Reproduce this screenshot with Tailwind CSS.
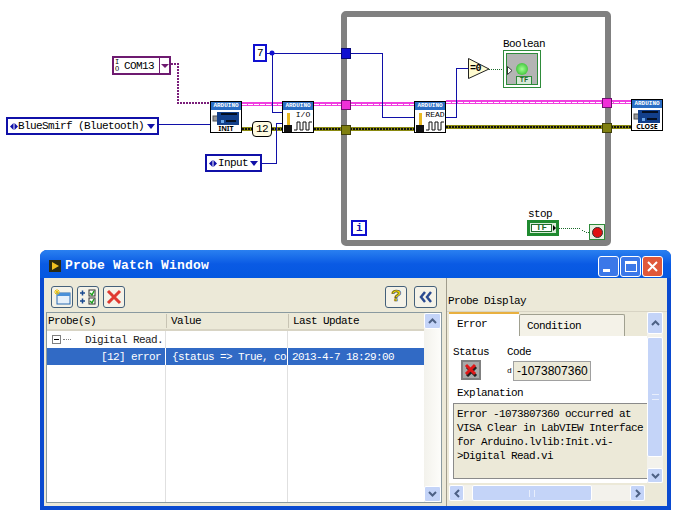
<!DOCTYPE html>
<html lang="en">
<head>
  <meta charset="UTF-8" />
  <meta name="viewport" content="width=device-width, initial-scale=1.0"/>
  <title>Digital Read | Probe Watch Window</title>
  <script src="https://cdn.jsdelivr.net/npm/@tailwindcss/browser@4"></script>
</head>

<body class="bg-white w-[694px] h-[519px] overflow-hidden font-['Liberation_Mono',monospace] text-[11px] tracking-[-0.6px] leading-[14px] text-black">

  <!-- Block diagram -->
  <section class="relative h-[250px]">

    <!-- While loop frame -->
    <div class="absolute left-[341px] top-[11px] w-[270px] h-[235px] border-[6px] border-[#808080] rounded-[5px]"></div>

    <!-- Wires -->
    <svg class="absolute left-0 top-0" width="694" height="250" fill="none" shape-rendering="crispEdges">
      <path d="M171 64H178V103H210" stroke="#7a1f7a" stroke-width="2" stroke-dasharray="2 1"/>
      <path d="M242 104H282M314 104H414M446 102H631" stroke="#f040e0" stroke-width="4"/>
      <path d="M242 104H282M314 104H414M446 102H631" stroke="#fff" stroke-width="1" stroke-dasharray="5 1"/>
      <path d="M242 129H252M272 129H282M314 129H414M446 127H631" stroke="#8a8a10" stroke-width="4"/>
      <path d="M242 129H252M272 129H282M314 129H414M446 127H631" stroke="#111" stroke-width="2" stroke-dasharray="2 1"/>
      <path d="M159 124H210M262 163H276V123H282M266 53H345M272 53V112H282M350 53H382V117H414M446 117H456V68H468" stroke="#1010a8" stroke-width="1"/>
      <circle cx="272" cy="53" r="2.5" fill="#1010d0" shape-rendering="auto"/>
      <path d="M489 69H505M559 228H580L585 232H589" stroke="#1a6a2a" stroke-dasharray="1 1"/>
      <!-- Shift registers and tunnels -->
      <rect x="341" y="48" width="9" height="10" fill="#1010d0" stroke="#08087a"/>
      <rect x="341" y="100" width="9" height="9" fill="#f030d8" stroke="#701070"/>
      <rect x="341" y="125" width="9" height="9" fill="#808010" stroke="#404008"/>
      <rect x="602" y="98" width="9" height="9" fill="#f030d8" stroke="#701070"/>
      <rect x="602" y="123" width="9" height="9" fill="#808010" stroke="#404008"/>
      <!-- Equal to zero -->
      <path d="M468.500 58.500V78.500L489 69Z" fill="#fffbd0" stroke="#222" shape-rendering="auto"/>
    </svg>
    <span class="absolute left-[470px] top-[62px] text-[10px] leading-[14px] font-bold">=0</span>

    <!-- Controls -->
    <div class="absolute left-[112px] top-[56px] w-[59px] h-[19px] border-2 border-[#6e1a70] bg-white flex items-center">
      <span class="w-[10px] text-[7px] leading-[7px] pl-[1px]">I<br/>O</span>
      <span class="flex-1 text-[11px]">COM13</span>
      <span class="w-[10px] h-full border-l border-[#6e1a70] flex items-center justify-center">
        <span class="border-x-[4px] border-t-[4px] border-x-transparent border-t-[#6e1a70]"></span>
      </span>
    </div>

    <div class="absolute left-[6px] top-[117px] w-[153px] h-[18px] border-2 border-[#1010a8] bg-white flex items-center pl-[2px] whitespace-nowrap">
      <svg width="8" height="7" class="shrink-0"><path d="M0 3.500L3.500 0V7ZM8 3.500L4.500 0V7Z" fill="#1010a8"/></svg>
      <span class="flex-1">BlueSmirf (Bluetooth)</span>
      <span class="mr-[2px] border-x-[4px] border-t-[5px] border-x-transparent border-t-[#1010a8]"></span>
    </div>

    <div class="absolute left-[205px] top-[154px] w-[57px] h-[18px] border-2 border-[#1010a8] bg-white flex items-center pl-[2px] whitespace-nowrap">
      <svg width="9" height="7" class="shrink-0"><path d="M0 3.500L3.500 0V7ZM8 3.500L4.500 0V7Z" fill="#1010a8"/></svg>
      <span class="flex-1">Input</span>
      <span class="mr-[2px] border-x-[4px] border-t-[5px] border-x-transparent border-t-[#1010a8]"></span>
    </div>

    <div class="absolute left-[253px] top-[44px] w-[14px] h-[18px] border-2 border-[#1010d0] bg-white flex items-center justify-center">7</div>
    <div class="absolute left-[252px] top-[121px] w-[20px] h-[16px] border border-black bg-[#fffbe0] rounded-[4px] flex items-center justify-center">12</div>

    <!-- INIT -->
    <div class="absolute left-[210px] top-[101px] w-[32px] h-[32px] border border-black bg-white flex flex-col items-center">
      <div class="w-full h-[8px] bg-[#2a6dc4] text-white text-[6px] leading-[8px] tracking-[0] text-center font-bold shrink-0">ARDUINO</div>
      <svg width="28" height="14" class="mt-[1px] shrink-0">
        <rect x="1" y="5" width="5" height="5" fill="#999" stroke="#555"/>
        <rect x="5" y="1" width="22" height="13" fill="#123f8a"/>
        <path d="M9 3H25M14 10H24" stroke="#000" stroke-width="1.500"/>
        <rect x="9" y="9" width="3" height="3" fill="#6aa6e8"/>
      </svg>
      <span class="text-[7px] leading-[8px] tracking-[0] font-sans font-bold">INIT</span>
    </div>

    <!-- I/O -->
    <div class="absolute left-[282px] top-[101px] w-[32px] h-[32px] border border-black bg-white flex flex-col">
      <div class="w-full h-[8px] bg-[#2a6dc4] text-white text-[6px] leading-[8px] tracking-[0] text-center font-bold shrink-0">ARDUINO</div>
      <div class="flex flex-1">
        <svg width="10" height="22" class="shrink-0">
          <rect x="4" y="3" width="3" height="13" fill="#e8b820"/>
          <rect x="1" y="15" width="8" height="7" fill="#111"/>
        </svg>
        <div class="flex flex-col items-center">
          <span class="text-[8px] leading-[10px] tracking-[0]">I/O</span>
          <svg width="20" height="11"><path d="M1 10H4V2H7V10H10V2H13V10H16V2H19" stroke="#111" fill="none"/></svg>
        </div>
      </div>
    </div>

    <!-- READ -->
    <div class="absolute left-[414px] top-[101px] w-[32px] h-[32px] border border-black bg-white flex flex-col">
      <div class="w-full h-[8px] bg-[#2a6dc4] text-white text-[6px] leading-[8px] tracking-[0] text-center font-bold shrink-0">ARDUINO</div>
      <div class="flex flex-1">
        <svg width="10" height="22" class="shrink-0">
          <rect x="4" y="3" width="3" height="13" fill="#e8b820"/>
          <rect x="1" y="15" width="8" height="7" fill="#111"/>
        </svg>
        <div class="flex flex-col items-center">
          <span class="text-[8px] leading-[10px] tracking-[0]">READ</span>
          <svg width="20" height="11"><path d="M1 10H4V2H7V10H10V2H13V10H16V2H19" stroke="#111" fill="none"/></svg>
        </div>
      </div>
    </div>

    <!-- CLOSE -->
    <div class="absolute left-[631px] top-[99px] w-[32px] h-[32px] border border-black bg-white flex flex-col items-center">
      <div class="w-full h-[8px] bg-[#2a6dc4] text-white text-[6px] leading-[8px] tracking-[0] text-center font-bold shrink-0">ARDUINO</div>
      <svg width="28" height="14" class="mt-[1px] shrink-0">
        <rect x="1" y="5" width="5" height="5" fill="#999" stroke="#555"/>
        <rect x="5" y="1" width="22" height="13" fill="#123f8a"/>
        <path d="M9 3H25M14 10H24" stroke="#000" stroke-width="1.500"/>
        <rect x="9" y="9" width="3" height="3" fill="#6aa6e8"/>
      </svg>
      <span class="text-[7px] leading-[8px] tracking-[0] font-sans font-bold">CLOSE</span>
    </div>

    <!-- Boolean indicator -->
    <span class="absolute left-[503px] top-[37px]">Boolean</span>
    <div class="absolute left-[503px] top-[50px] w-[38px] h-[38px] border border-[#2e8b3a] bg-white p-[2px]">
      <div class="relative w-full h-full border border-[#2e8b3a] bg-[#b4b4b4] flex items-center justify-center">
        <span class="w-[12px] h-[12px] rounded-full bg-[radial-gradient(circle,#a0ff90,#20b020)] mb-[1px]"></span>
        <svg width="6" height="9" class="absolute left-0 top-[12px]"><path d="M0.500 0.500L5 4.500L0.500 8.500Z" fill="#fff" stroke="#333"/></svg>
        <span class="absolute left-[9px] bottom-0 w-[16px] h-[8px] bg-[#d8e8d8] border border-b-0 border-[#2e8b3a] text-[7px] leading-[7px] tracking-[0] text-center font-bold text-[#1c6a2a]">TF</span>
      </div>
    </div>

    <!-- Stop -->
    <span class="absolute left-[528px] top-[207px]">stop</span>
    <div class="absolute left-[527px] top-[220px] w-[32px] h-[16px] border-[3px] border-[#1f8a30] bg-[#d8ecd8] flex items-center pl-[1px]">
      <span class="w-[22px] h-[8px] border border-[#1f6a2a] text-[9px] leading-[6px] tracking-[0] text-center font-bold text-[#1f6a2a] bg-white">TF</span>
      <span class="ml-[1px] border-y-[3px] border-l-[3px] border-y-transparent border-l-black"></span>
    </div>
    <div class="absolute left-[589px] top-[224px] w-[16px] h-[16px] border border-[#2e8b3a] bg-[#e8f0e0] flex items-center justify-center">
      <span class="w-[11px] h-[11px] rounded-full bg-[#e01010] border border-[#333]"></span>
    </div>

    <!-- Iteration terminal -->
    <div class="absolute left-[351px] top-[220px] w-[16px] h-[16px] border-2 border-[#1010d0] bg-white flex items-center justify-center text-[#1010a8] font-bold">i</div>
  </section>

  <!-- Probe Watch Window -->
  <section class="ml-[40px] w-[631px] h-[260px] rounded-t-[7px] bg-[#0a52dc] border-x-[4px] border-b-[4px] border-[#0a4ad0] flex flex-col">

    <!-- Title bar -->
    <header class="h-[28px] shrink-0 -mx-[4px] px-[8px] pt-[4px] rounded-t-[7px] bg-gradient-to-b from-[#2a80f0] via-[#0a5ae4] to-[#0458e0] flex items-center">
      <svg width="14" height="14" class="shrink-0">
        <rect x="1" y="1" width="12" height="12" fill="#2a2a10"/>
        <path d="M4 3L11 7L4 11Z" fill="#f0c020"/>
      </svg>
      <h1 class="ml-[3px] text-white font-bold text-[13px] tracking-[0.2px]">Probe Watch Window</h1>
      <div class="ml-auto flex gap-[1px]">
        <button class="w-[21px] h-[21px] rounded-[3px] border border-white bg-[#3c78e8] flex items-end p-[4px]">
          <span class="w-[7px] h-[3px] bg-white"></span>
        </button>
        <button class="w-[21px] h-[21px] rounded-[3px] border border-white bg-[#3c78e8] flex items-center justify-center">
          <span class="w-[12px] h-[11px] border border-t-[3px] border-white"></span>
        </button>
        <button class="w-[21px] h-[21px] rounded-[3px] border border-white bg-[#e0583a] flex items-center justify-center">
          <svg width="13" height="13"><path d="M2 2L11 11M11 2L2 11" stroke="#fff" stroke-width="2"/></svg>
        </button>
      </div>
    </header>

    <!-- Client area -->
    <div class="flex-1 min-h-0 bg-[#ece9d8] flex pl-[2px]">

      <!-- Left pane -->
      <div class="w-[396px] shrink-0 flex flex-col pb-[3px]">
        <!-- Toolbar -->
        <div class="h-[34px] shrink-0 flex items-start pt-[8px] pl-[5px] pr-[5px]">
          <button class="w-[22px] h-[22px] rounded-[3px] border border-[#44607a] bg-[#f4f2e8] flex items-center justify-center">
            <svg width="18" height="16">
              <rect x="4" y="4" width="13" height="11" fill="#e6f0fa" stroke="#2a6ab0"/>
              <rect x="4" y="4" width="13" height="3" fill="#4a90d8"/>
              <path d="M4 0V6M1 3H7M2 1L6 5M6 1L2 5" stroke="#e8c010"/>
            </svg>
          </button>
          <button class="ml-[4px] w-[22px] h-[22px] rounded-[3px] border border-[#44607a] bg-[#f4f2e8] flex items-center justify-center">
            <svg width="18" height="16" fill="none">
              <path d="M1 4H6M3.500 1.500V6.500M1 12H6M3.500 9.500V14.500" stroke="#1a4a90" stroke-width="1.500"/>
              <rect x="10" y="1" width="6" height="6" fill="#fff" stroke="#333"/>
              <rect x="10" y="9" width="6" height="6" fill="#fff" stroke="#333"/>
              <path d="M11 4L13 6L15 2M11 12L13 14L15 10" stroke="#20a020" stroke-width="1.500"/>
            </svg>
          </button>
          <button class="ml-[4px] w-[22px] h-[22px] rounded-[3px] border border-[#44607a] bg-[#f4f2e8] flex items-center justify-center">
            <svg width="16" height="16"><path d="M2 2L14 14M14 2L2 14" stroke="#e03a30" stroke-width="3"/></svg>
          </button>
          <button class="ml-auto w-[22px] h-[22px] rounded-[3px] border border-[#44607a] bg-[#f4f2e8] flex items-center justify-center font-bold text-[17px] text-[#f0d800] [-webkit-text-stroke:0.6px_#333]">?</button>
          <button class="ml-[7px] w-[23px] h-[22px] rounded-[3px] border border-[#44607a] bg-[#f4f2e8] flex items-center justify-center">
            <svg width="14" height="12" fill="none"><path d="M6 1L2 6L6 11M12 1L8 6L12 11" stroke="#2a4a90" stroke-width="2.500"/></svg>
          </button>
        </div>

        <!-- Probe table -->
        <div class="flex-1 min-h-0 bg-white border border-[#8a9aa0] flex">
          <div class="flex-1 min-w-0 flex flex-col">
            <div class="h-[18px] shrink-0 bg-[#ece9d8] border-b-2 border-[#d8d4c4] grid grid-cols-[119px_122px_1fr] items-center">
              <span class="pl-[1px]">Probe(s)</span>
              <span class="pl-[4px] border-l border-[#c8c4b4]">Value</span>
              <span class="pl-[4px] border-l border-[#c8c4b4]">Last Update</span>
            </div>
            <div class="flex-1 relative grid grid-cols-[119px_122px_1fr] grid-rows-[17px_17px_1fr]">
              <div class="flex items-center pl-[5px] border-r border-[#e0e0e0]">
                <span class="w-[9px] h-[9px] border border-[#808080] flex items-center justify-center"><span class="w-[5px] h-[1px] bg-black"></span></span>
                <span class="ml-[2px] w-[8px] border-t border-dotted border-[#808080]"></span>
                <span class="ml-[14px] text-[#222] whitespace-nowrap">Digital Read.</span>
              </div>
              <div class="border-r border-[#e0e0e0]"></div>
              <div></div>
              <div class="bg-[#316ac5] text-white flex items-center justify-end pr-[4px] border-r border-white">[12] error</div>
              <div class="bg-[#316ac5] text-white flex items-center pl-[6px] border-r border-white overflow-hidden whitespace-nowrap">{status => True, co</div>
              <div class="bg-[#316ac5] text-white flex items-center pl-[4px]">2013-4-7 18:29:00</div>
              <div class="border-r border-[#e0e0e0]"></div>
              <div class="border-r border-[#e0e0e0]"></div>
              <div></div>
            </div>
          </div>
          <!-- Scrollbar -->
          <div class="w-[17px] shrink-0 bg-gradient-to-r from-[#f3f2ec] to-[#fdfdfa] flex flex-col justify-between">
            <button class="h-[16px] bg-[#c4d4f8] rounded-[2px] border border-white flex items-center justify-center">
              <svg width="9" height="6" fill="none"><path d="M1 5L4.500 1.500L8 5" stroke="#4d6185" stroke-width="2"/></svg>
            </button>
            <button class="h-[16px] bg-[#c4d4f8] rounded-[2px] border border-white flex items-center justify-center">
              <svg width="9" height="6" fill="none"><path d="M1 1L4.500 4.500L8 1" stroke="#4d6185" stroke-width="2"/></svg>
            </button>
          </div>
        </div>
      </div>

      <!-- Splitter -->
      <div class="w-[5px] shrink-0 border-r border-[#a09c8c]"></div>

      <!-- Probe Display pane -->
      <div class="flex-1 min-w-0 flex flex-col pb-[5px]">
        <div class="h-[34px] shrink-0 flex items-end pl-[1px] pb-[3px] border-b border-[#d8d4c4]">Probe Display</div>

        <div class="flex-1 min-h-0 flex flex-col pl-[2px] pr-[4px]">
          <div class="flex-1 min-h-0 flex">
            <!-- Tab panel -->
            <div class="flex-1 min-w-0 flex flex-col">
              <div class="h-[24px] shrink-0 flex items-end">
                <div class="w-[70px] h-[24px] bg-white border-t-[2px] border-[#e8b040] pl-[8px] pt-[3px]">Error</div>
                <div class="w-[106px] h-[22px] bg-[#f4f2e8] border border-b-0 border-[#a0a090] rounded-t-[2px] pl-[7px] pt-[4px]">Condition</div>
              </div>
              <div class="flex-1 min-h-0 bg-white pl-[4px] pt-[9px] overflow-hidden">
                <div class="flex h-[42px]">
                  <div class="w-[54px] shrink-0">
                    <span class="block">Status</span>
                    <span class="mt-[1px] ml-[8px] w-[20px] h-[20px] bg-[#a8a8a8] border-2 border-[#808080] flex items-center justify-center">
                      <svg width="14" height="14">
                        <path d="M3 4L12 13M12 4L3 13" stroke="#222" stroke-width="3"/>
                        <path d="M2 2L11 11M11 2L2 11" stroke="#e01818" stroke-width="3"/>
                      </svg>
                    </span>
                  </div>
                  <div>
                    <span class="block">Code</span>
                    <div class="mt-[2px] flex items-center">
                      <span class="text-[8px] w-[6px]">d</span>
                      <span class="w-[78px] h-[20px] bg-[#ece9d8] border border-[#a0a0a0] flex items-center pl-[3px] font-['Liberation_Sans',sans-serif] text-[12px] tracking-normal">-1073807360</span>
                    </div>
                  </div>
                </div>
                <span class="block ml-[4px] -mt-[1px]">Explanation</span>
                <div class="mt-[3px] h-[76px] bg-[#ece9d8] border border-[#8a8a8a] border-r-0 pl-[3px] pt-[3px]">
                  Error -1073807360 occurred at<br/>
                  VISA Clear in LabVIEW Interface<br/>
                  for Arduino.lvlib:Init.vi-<br/>
                  &gt;Digital Read.vi
                </div>
              </div>
            </div>
            <!-- Vertical scrollbar -->
            <div class="w-[16px] shrink-0 flex flex-col bg-[#f3f2ec]">
              <button class="h-[22px] shrink-0 bg-[#c4d4f8] rounded-[2px] border border-white flex items-center justify-center">
                <svg width="9" height="6" fill="none"><path d="M1 5L4.500 1.500L8 5" stroke="#4d6185" stroke-width="2"/></svg>
              </button>
              <div class="h-[3px] shrink-0"></div>
              <div class="h-[120px] shrink-0 bg-[#c4d4f8] rounded-[2px] border border-white flex items-center justify-center">
                <span class="w-[7px] h-[6px] border-y border-[#e8eefc]"></span>
              </div>
              <div class="flex-1"></div>
              <button class="h-[15px] shrink-0 bg-[#c4d4f8] rounded-[2px] border border-white flex items-center justify-center">
                <svg width="9" height="6" fill="none"><path d="M1 1L4.500 4.500L8 1" stroke="#4d6185" stroke-width="2"/></svg>
              </button>
            </div>
          </div>

          <!-- Horizontal scrollbar -->
          <div class="h-[16px] shrink-0 mt-[2px] mr-[18px] flex items-stretch bg-[#f3f2ec]">
            <button class="w-[15px] shrink-0 bg-[#c4d4f8] rounded-[2px] border border-white flex items-center justify-center">
              <svg width="6" height="9" fill="none"><path d="M5 1L1.500 4.500L5 8" stroke="#4d6185" stroke-width="2"/></svg>
            </button>
            <div class="ml-[8px] w-[120px] bg-[#c4d4f8] rounded-[2px] border border-white flex items-center justify-center">
              <span class="w-[6px] h-[7px] border-x border-[#e8eefc]"></span>
            </div>
            <button class="ml-auto w-[15px] shrink-0 bg-[#c4d4f8] rounded-[2px] border border-white flex items-center justify-center">
              <svg width="6" height="9" fill="none"><path d="M1 1L4.500 4.500L1 8" stroke="#4d6185" stroke-width="2"/></svg>
            </button>
          </div>
        </div>
      </div>
    </div>
  </section>

</body>
</html>
